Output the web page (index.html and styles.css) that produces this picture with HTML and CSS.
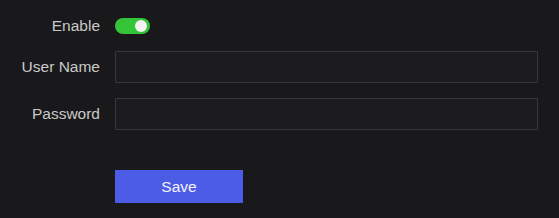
FILE: index.html
```html
<!DOCTYPE html>
<html lang="en">
<head>
  <meta charset="UTF-8">
  <title>Account Settings</title>
  <link rel="stylesheet" href="styles.css">
</head>
<body>
  <div class="settings-form">
    <div class="form-row toggle-row">
      <label class="form-label">Enable</label>
      <div class="switch on"><span class="knob"></span></div>
    </div>
    <div class="form-row input-row">
      <label class="form-label" for="userName">User Name</label>
      <input class="text-input" id="userName" type="text">
    </div>
    <div class="form-row input-row password-row">
      <label class="form-label" for="password">Password</label>
      <input class="text-input" id="password" type="password">
    </div>
    <div class="form-row button-row">
      <span class="form-label"></span>
      <button class="save-btn">Save</button>
    </div>
  </div>
</body>
</html>
```

FILE: styles.css
```css
body {
  margin: 0;
  background-color: #19191b;
  font-family: "Liberation Sans", Arial, sans-serif;
  color: #c9c9c9;
}

.settings-form {
  padding-top: 18px;
  display: flex;
  flex-direction: column;
}

.form-row {
  display: flex;
  align-items: center;
  gap: 15px;
}

.form-label {
  width: 100px;
  text-align: right;
  font-size: 15.5px;
  flex-shrink: 0;
}

/* Toggle switch */
.toggle-row {
  height: 16px;
}

.switch {
  position: relative;
  width: 35px;
  height: 16px;
  border-radius: 8px;
  background-color: #34c437;
}

.switch .knob {
  position: absolute;
  top: 2px;
  right: 3px;
  width: 12px;
  height: 12px;
  border-radius: 50%;
  background-color: #f2f2f2;
}

/* Inputs */
.input-row {
  margin-top: 17px;
}

.password-row {
  margin-top: 15px;
}

.text-input {
  box-sizing: border-box;
  width: 423px;
  height: 32px;
  background-color: #1b1b1f;
  border: 1px solid #38383a;
  border-radius: 1px;
  color: #ddd;
  padding: 0 8px;
  outline: none;
}

/* Save button */
.button-row {
  margin-top: 40px;
}

.save-btn {
  width: 128px;
  height: 33px;
  border: none;
  background-color: #4c5ce6;
  color: #f4f4ff;
  font-family: "Liberation Sans", Arial, sans-serif;
  font-size: 15.5px;
  cursor: pointer;
}
```
